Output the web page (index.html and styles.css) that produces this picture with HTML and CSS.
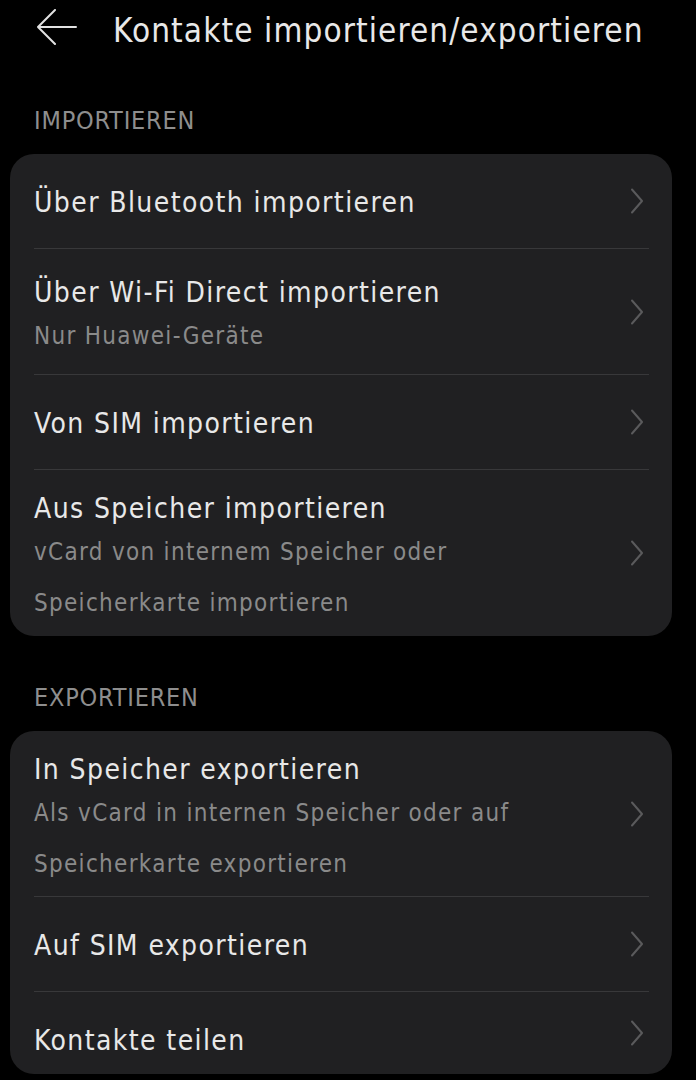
FILE: index.html
```html
<!DOCTYPE html>
<html lang="de">
<head>
<meta charset="utf-8">
<title>Kontakte importieren/exportieren</title>
<link rel="stylesheet" href="styles.css">
</head>
<body>
<div class="screen">
  <header class="header">
    <svg class="back" width="40" height="36" viewBox="0 0 40 36" aria-hidden="true">
      <path d="M18 1 L1 18 L18 35 M1 18 H39" fill="none" stroke="#e2e2e2" stroke-width="2" stroke-linecap="round" stroke-linejoin="round"/>
    </svg>
    <h1 class="title">Kontakte importieren/exportieren</h1>
  </header>

  <section class="section">
    <div class="label">IMPORTIEREN</div>
    <div class="card">
      <div class="row">
        <div class="row-text single"><div class="row-title">Über Bluetooth importieren</div></div>
        <svg class="chev" width="14" height="26" viewBox="0 0 14 26"><path d="M2 1.5 L12 13 L2 24.5" fill="none" stroke="#5a5a5c" stroke-width="2" stroke-linecap="round" stroke-linejoin="round"/></svg>
      </div>
      <div class="row">
        <div class="row-text sub1">
          <div class="row-title">Über Wi-Fi Direct importieren</div>
          <div class="row-sub">Nur Huawei-Geräte</div>
        </div>
        <svg class="chev" width="14" height="26" viewBox="0 0 14 26"><path d="M2 1.5 L12 13 L2 24.5" fill="none" stroke="#5a5a5c" stroke-width="2" stroke-linecap="round" stroke-linejoin="round"/></svg>
      </div>
      <div class="row">
        <div class="row-text single"><div class="row-title">Von SIM importieren</div></div>
        <svg class="chev" width="14" height="26" viewBox="0 0 14 26"><path d="M2 1.5 L12 13 L2 24.5" fill="none" stroke="#5a5a5c" stroke-width="2" stroke-linecap="round" stroke-linejoin="round"/></svg>
      </div>
      <div class="row">
        <div class="row-text sub2">
          <div class="row-title">Aus Speicher importieren</div>
          <div class="row-sub">vCard von internem Speicher oder<br>Speicherkarte importieren</div>
        </div>
        <svg class="chev" width="14" height="26" viewBox="0 0 14 26"><path d="M2 1.5 L12 13 L2 24.5" fill="none" stroke="#5a5a5c" stroke-width="2" stroke-linecap="round" stroke-linejoin="round"/></svg>
      </div>
    </div>
  </section>

  <section class="section">
    <div class="label">EXPORTIEREN</div>
    <div class="card">
      <div class="row">
        <div class="row-text sub2">
          <div class="row-title">In Speicher exportieren</div>
          <div class="row-sub">Als vCard in internen Speicher oder auf<br>Speicherkarte exportieren</div>
        </div>
        <svg class="chev" width="14" height="26" viewBox="0 0 14 26"><path d="M2 1.5 L12 13 L2 24.5" fill="none" stroke="#5a5a5c" stroke-width="2" stroke-linecap="round" stroke-linejoin="round"/></svg>
      </div>
      <div class="row">
        <div class="row-text single"><div class="row-title">Auf SIM exportieren</div></div>
        <svg class="chev" width="14" height="26" viewBox="0 0 14 26"><path d="M2 1.5 L12 13 L2 24.5" fill="none" stroke="#5a5a5c" stroke-width="2" stroke-linecap="round" stroke-linejoin="round"/></svg>
      </div>
      <div class="row">
        <div class="row-text single end"><div class="row-title">Kontakte teilen</div></div>
        <svg class="chev" width="14" height="26" viewBox="0 0 14 26"><path d="M2 1.5 L12 13 L2 24.5" fill="none" stroke="#5a5a5c" stroke-width="2" stroke-linecap="round" stroke-linejoin="round"/></svg>
      </div>
    </div>
  </section>
</div>
</body>
</html>
```

FILE: styles.css
```css
html, body {
  margin: 0;
  padding: 0;
  background: #000;
}

body {
  font-family: "DejaVu Sans Condensed", "DejaVu Sans", sans-serif;
  color: #e6e6e6;
  width: 696px;
  height: 1080px;
  overflow: hidden;
}

.screen {
  display: flex;
  flex-direction: column;
}

.header {
  display: flex;
  align-items: center;
  height: 62px;
  padding-left: 37px;
}

.back {
  flex: none;
  align-self: flex-start;
  margin-top: 9px;
}

.title {
  margin: 0 0 0 36px;
  font-size: 33px;
  font-weight: normal;
  letter-spacing: 1.1px;
  line-height: 40px;
  color: #e8e8e8;
  white-space: nowrap;
}

.section + .section {
  margin-top: 3px;
}

.label {
  padding: 42px 0 16px 34px;
  font-size: 25px;
  letter-spacing: 0.8px;
  line-height: 34px;
  color: #8e8e8e;
}

.card {
  margin: 0 24px 0 10px;
  background: #202022;
  border-radius: 24px;
  display: flex;
  flex-direction: column;
}

.row {
  display: flex;
  align-items: center;
  margin: 0 23px 0 24px;
  border-bottom: 1px solid #38383a;
}

.row:last-child {
  border-bottom: none;
}

.row-text {
  flex: 1;
  min-width: 0;
}

.row-text.single {
  padding: 31px 0 27px;
}

.row-text.sub1 {
  padding: 26px 0 12px;
}

.row-text.sub2 {
  padding: 21px 0 6px;
}

.row:last-child .row-text.single {
  padding-bottom: 28px;
}

.row:last-child .row-text.sub2 {
  padding-bottom: 7px;
}

.row:last-child .row-text.single.end {
  padding-bottom: 15px;
}

.row-title {
  font-size: 28px;
  letter-spacing: 1.4px;
  line-height: 36px;
  color: #e8e8e8;
  white-space: nowrap;
}

.row-sub {
  font-size: 24px;
  letter-spacing: 1.3px;
  line-height: 51px;
  color: #8a8a8a;
  white-space: nowrap;
}

.chev {
  flex: none;
  margin-right: 5px;
}
```
